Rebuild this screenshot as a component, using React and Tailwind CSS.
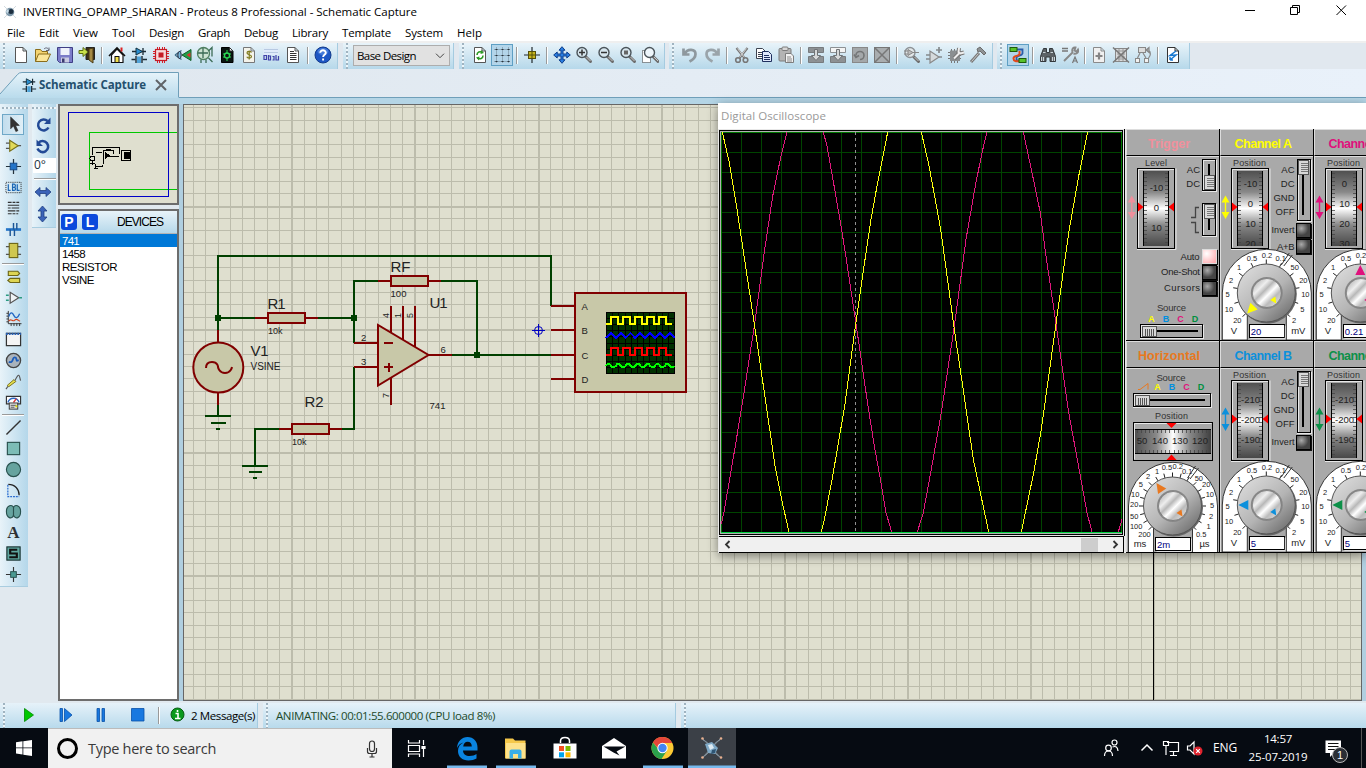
import React, { useLayoutEffect, useRef, useState } from "react";

const UI = "font-['Open_Sans','Noto_Sans',sans-serif]";
const ARIAL = "font-['Liberation_Sans',Arial,sans-serif]";

/* Text set to an exact advance width through letter spacing. */
function Fit({ w, className = "", children }) {
  const ref = useRef(null);
  const [ls, setLs] = useState(0);
  useLayoutEffect(() => {
    const natural = ref.current.getBoundingClientRect().width;
    setLs((w - natural) / String(children).length);
  }, []);
  return (
    <span ref={ref} className={`inline-block shrink-0 whitespace-pre ${className}`} style={{ letterSpacing: `${ls}px` }}>
      {children}
    </span>
  );
}

/* ---------- toolbar icons, 18x18 ---------- */
const page = (stroke = "#555", fill = "#fff") => (
  <path d="M3.500 1.500h7.500l3.500 3.500v11.500h-11z M11 1.500v3.500h3.500" fill={fill} stroke={stroke} />
);
const Mag = ({ children, c = "#4b545a", f = "#d7e6ee" }) => (
  <>
    <path d="M10.500 10.500l5 5" stroke="#6d6d6d" strokeWidth="3" strokeLinecap="round" />
    <path d="M11.500 11l4 4" stroke="#c8c8c8" strokeWidth="1" />
    <circle cx="7" cy="6.500" r="5" fill={f} stroke={c} strokeWidth="1.400" />
    {children}
  </>
);
const schem = (
  <>
    <path d="M2 5.500h14M13 2v7M1.500 13.500h4M12.500 13.500h4.500" stroke="#1b2a33" strokeWidth="1.300" />
    <path d="M6 2v7l6.500-3.500z" fill="#2a8fd0" stroke="#12303f" />
    <path d="M6 10v7M12 10v7" stroke="#1b2a33" strokeWidth="1.400" />
    <path d="M8 10.500v6.500M10 10.500v6.500" stroke="#2a8fd0" strokeWidth="1.500" />
  </>
);
const IC = {
  fresh: page(),
  open: (
    <>
      <path d="M1.500 15.500v-12h5l1.500 2h5.500v3" fill="#f4d470" stroke="#8a6d1c" />
      <path d="M1.500 15.500l3-7.500h12l-3.500 7.500z" fill="#fbe699" stroke="#8a6d1c" />
      <path d="M10 3c2-2 4-1 5 1m0-2.500v3h-3" fill="none" stroke="#667" />
    </>
  ),
  save: (
    <>
      <path d="M1.500 1.500h15v15h-13l-2-2z" fill="#7b7cc9" stroke="#3f3f86" />
      <rect x="4.500" y="2" width="9" height="7" fill="#eef2fb" />
      <rect x="5" y="11.500" width="8" height="5" fill="#c9cbe2" />
      <rect x="6" y="12.500" width="2.500" height="4" fill="#3a3b70" />
    </>
  ),
  exit: (
    <>
      <path d="M8 1.500h8.500v12h-8.500z" fill="#3c2f16" stroke="#222" />
      <path d="M11 3l4-1v15l-4-3z" fill="#a58a44" stroke="#4a3b15" />
      <path d="M1 4.500h4v-3l5 4.500-5 4.500v-3h-4z" fill="#c9e04a" stroke="#5b6d14" />
    </>
  ),
  home: (
    <>
      <path d="M3.500 9v7.500h11.500v-7.500l-6-6z" fill="#fff" stroke="#111" strokeWidth="1.200" />
      <path d="M1 10l8-8 8 8" fill="none" stroke="#111" strokeWidth="1.600" />
      <rect x="12.500" y="1.500" width="2" height="4" fill="#d22" />
      <rect x="7" y="10.500" width="4" height="6" fill="#f3e04a" stroke="#111" />
    </>
  ),
  schem,
  chip: (
    <>
      <path d="M5.500 1v16M7.500 1v16M10.500 1v16M12.500 1v16M1 5.500h16M1 7.500h16M1 10.500h16M1 12.500h16" stroke="#d8202a" />
      <rect x="3.500" y="3.500" width="11" height="11" fill="#f6d9da" stroke="#c51b25" strokeWidth="1.200" />
      <rect x="6.500" y="6.500" width="5" height="5" fill="#c51b25" />
    </>
  ),
  view3d: (
    <>
      <path d="M1 9l6.500-4.500M1 9l6.500 4.500" stroke="#3c6a86" strokeWidth="1.300" />
      <ellipse cx="5.500" cy="9" rx="1.700" ry="3.500" fill="#79b8dc" stroke="#223" />
      <path d="M8 9l9-5.500v11z" fill="#23a04a" stroke="#145c2b" />
      <path d="M12.500 9l4-2.500v5z" fill="#d33" />
    </>
  ),
  gerber: (
    <>
      <circle cx="7.500" cy="7.500" r="6" fill="#cde3d2" stroke="#4f7f60" strokeWidth="1.300" />
      <path d="M2 7h10M7 2v10M5 13.500v3.500M10 13.500v3.500M12.500 5l3.500-3.500v9M12.500 12l4 4" fill="none" stroke="#3b6b55" strokeWidth="1.300" />
    </>
  ),
  explorer: (
    <>
      <path d="M3.500 1.500h8l3.500 3.500v11.500h-11.500z" fill="#0a1510" stroke="#000" />
      <path d="M11.500 1.500v3.500h3.500z" fill="#fff" stroke="#333" />
      <circle cx="9" cy="9.500" r="2.500" fill="none" stroke="#2bdc55" strokeWidth="1.300" />
      <path d="M9 4v3M9 12v3M5 8h2M5 11h2M11 8h2M11 11h2" stroke="#2bdc55" />
    </>
  ),
  bom: (
    <>
      {page("#777", "#f4f3ea")}
      <path d="M11.500 6.500c-1-1.500-4.500-1.500-4.500.5s4.500 1.500 4.500 3.500-4 2-4.700.3M9.200 4.500v9" fill="none" stroke="#7f7a1c" strokeWidth="1.200" />
    </>
  ),
  code: (
    <>
      <rect x="1.500" y="2.500" width="15" height="6.500" fill="#dfeafa" />
      <path d="M2 3.500h14M2 6.500h14" stroke="#b7c9e2" />
      <path d="M2 9.500h2.500v4h-2.500zM6.500 9v5h2v-4h-2M10.500 10.500h1.500v3.500h-1.500M14 9v5h2.500v-4" fill="none" stroke="#3f40a8" strokeWidth="1.200" />
    </>
  ),
  notes: (
    <>
      {page()}
      <path d="M6 5.500h4M6 7.500h6.500M6 9.500h6.500M6 11.500h6.500M6 13.500h6.500" stroke="#333" />
    </>
  ),
  help: (
    <>
      <circle cx="9" cy="9" r="8" fill="#1d56c4" stroke="#123a8b" />
      <ellipse cx="9" cy="5.500" rx="5.500" ry="3.500" fill="#5f93e8" opacity=".6" />
      <path d="M6.200 6.800c0-3.400 5.600-3.400 5.600 0 0 2-2.700 2-2.700 4.200M9.100 12.500v2" fill="none" stroke="#fff" strokeWidth="1.900" />
    </>
  ),
  redraw: (
    <>
      {page()}
      <path d="M6 9c0-3 3-4 5.500-2.500M12 9.500c0 3-3 4-5.500 2.500" fill="none" stroke="#2c9a25" strokeWidth="1.600" />
      <path d="M10 4l3 3-3.500 1zM8 14.500l-3-3 3.500-1z" fill="#2c9a25" />
    </>
  ),
  grid: (
    <>
      <path d="M1 3.500h16M1 9.500h16M1 15.500h16M3.500 1v16M9.500 1v16M15.500 1v16" stroke="#51606b" strokeDasharray="1 1" strokeDashoffset=".5" opacity=".75" />
      <path d="M2.500 3.500h2M8.500 3.500h2M14.500 3.500h2M2.500 9.500h2M8.500 9.500h2M14.500 9.500h2M2.500 15.500h2M8.500 15.500h2M14.500 15.500h2" stroke="#26323b" />
    </>
  ),
  origin: (
    <>
      <path d="M1 9h16M9 1v16" stroke="#20282c" strokeWidth="1.200" />
      <rect x="5.500" y="5.500" width="7" height="7" fill="#c6b51e" stroke="#55500c" />
      <path d="M5 9h8M9 5v8" stroke="#55500c" />
    </>
  ),
  pan: (
    <path
      d="M9 .7l3 3.500h-2v3.800h3.800v-2l3.500 3-3.500 3v-2h-3.800v3.800h2l-3 3.500-3-3.500h2v-3.800h-3.800v2l-3.500-3 3.500-3v2h3.800v-3.800h-2z"
      fill="#2b7ee0"
      stroke="#0d3f8c"
    />
  ),
  zin: <Mag><path d="M4 6.500h6M7 3.500v6" stroke="#333" strokeWidth="1.500" /></Mag>,
  zout: <Mag><path d="M4 6.500h6" stroke="#333" strokeWidth="1.500" /></Mag>,
  zall: <Mag><rect x="5" y="4.500" width="4" height="4" fill="#666" /></Mag>,
  zarea: (
    <>
      <path d="M1.500 4.500h8v12h-8z" fill="#fff" stroke="#333" strokeDasharray="1 1" />
      <g transform="translate(1.500 0)"><Mag f="#eef6fb" /></g>
    </>
  ),
  undo: <path d="M2.500 2.500v6h6M3.500 8c3-6 11-5 11 0 0 4-3 6-6 7.500" fill="none" stroke="#8e989e" strokeWidth="2.700" />,
  redo: <path d="M15.500 2.500v6h-6M14.500 8c-3-6-11-5-11 0 0 4 3 6 6 7.500" fill="none" stroke="#9aa4aa" strokeWidth="2.700" />,
  cut: (
    <>
      <path d="M3.500 2l8 10M14.500 2l-8 10" stroke="#777" strokeWidth="2.200" />
      <path d="M4.500 2.500l7 9M13.500 2.500l-7 9" stroke="#e8e8e8" strokeWidth=".8" />
      <circle cx="5" cy="14" r="2.300" fill="none" stroke="#777" strokeWidth="1.600" />
      <circle cx="12.500" cy="14" r="2.300" fill="none" stroke="#777" strokeWidth="1.600" />
    </>
  ),
  copy: (
    <>
      <path d="M1.500 2.500h6l2.500 2.500v7.500h-8.500z" fill="#fff" stroke="#3d4350" />
      <path d="M3 6.500h4M3 8.500h4M3 10.500h4" stroke="#3d4350" />
      <path d="M7.500 5.500h6l3 3v7h-9z" fill="#dfe8fa" stroke="#1f2f5e" />
      <path d="M9 9.500h5M9 11.500h6M9 13.500h6" stroke="#1f2f5e" />
    </>
  ),
  paste: (
    <>
      <rect x="2" y="2.500" width="12" height="12.500" rx="1" fill="#b4b4b4" stroke="#7d7d7d" />
      <rect x="5" y="1" width="6" height="3.500" rx="1" fill="#d7d7d7" stroke="#7d7d7d" />
      <path d="M8.500 7.500h5.500l2.500 2.500v6.500h-8z" fill="#f2f2f2" stroke="#7d7d7d" />
      <path d="M10 11h4M10 13h5M10 15h5" stroke="#8b8b8b" />
    </>
  ),
  bcopy: (
    <>
      <path d="M1.500 1.500h15v5h-15zM1.500 10.500h15v6h-15z" fill="#8d9194" stroke="#777b7e" />
      <path d="M7.500 3.500h3v6h3l-4.500 5-4.500-5h3z" fill="#d6d8d9" stroke="#6f7376" />
    </>
  ),
  bmove: (
    <>
      <path d="M1.500 1.500h15v5h-15z" fill="#f4f4f4" stroke="#8d9194" />
      <path d="M1.500 10.500h15v6h-15z" fill="#8d9194" stroke="#777b7e" />
      <path d="M7.500 3.500h3v6h3l-4.500 5-4.500-5h3z" fill="#d6d8d9" stroke="#6f7376" />
    </>
  ),
  brot: <><rect x="1.500" y="1.500" width="15" height="15" fill="#a4a8aa" stroke="#888" /><path d="M5 9.500a4 4 0 1 1 4 4M3 8.500l2 3 3-2" fill="none" stroke="#747677" strokeWidth="1.600" /></>,
  bdel: <><rect x="1.500" y="1.500" width="15" height="15" fill="#a9adaf" stroke="#777" /><path d="M2 2l14 14M16 2l-14 14" stroke="#777" strokeWidth="1.500" /></>,
  pick: <Mag c="#8d9296" f="#e3e8ea"><path d="M5 3.500v6l5-3zM1 5h4M1 8h4M10 6.500h6" fill="#bbb" stroke="#888" /></Mag>,
  mkdev: <><path d="M5 5v12l9-6z" fill="#d5dadc" stroke="#888" strokeWidth="1.200" /><path d="M1 9h4M1 13h4M11 4h6M14 1v6M14 11h3" stroke="#858a8d" strokeWidth="1.700" /></>,
  pkg: (
    <>
      <path d="M4.500 3v14M7.500 3v14M10.500 3v14M1 6.500h13M1 9.500h13M1 12.500h13" stroke="#777" />
      <rect x="3" y="4.500" width="10" height="10.500" fill="#8b8f91" />
      <path d="M7 12.500l6-6M12 2l-.5 4 2 1.500 3.500-1" fill="none" stroke="#777" strokeWidth="4" />
      <path d="M7 12.500l6-6M12 2l-.5 4 2 1.500 3.500-1" fill="none" stroke="#eee" strokeWidth="2" />
    </>
  ),
  hammer: <><path d="M2 16l8-9" stroke="#777" strokeWidth="3" /><path d="M2.500 15.500l7-8" stroke="#ccc" /><path d="M8 3l3-2 6 6-2 2-4-4-2 1z" fill="#8e9294" stroke="#6c6c6c" /></>,
  wire: (
    <>
      <path d="M8 3.500h5.500v4c-1 3-5 1-6 4v3h3" fill="none" stroke="#2b5ca8" strokeWidth="1.800" />
      <path d="M10.500 5v3c-1 3-6 1-6 4.500 0 3 3 3 5.500 2.500" fill="none" stroke="#e3491b" strokeWidth="2" />
      <rect x="1" y="1.500" width="7" height="4" fill="#58c32a" stroke="#1c5b0a" />
      <rect x="10" y="12.500" width="7" height="4" fill="#58c32a" stroke="#1c5b0a" />
    </>
  ),
  find: (
    <>
      <path d="M4.500 2.500h3v4h3v-4h3l3 8v5h-5.500v-4.500h-4v4.500h-5.500v-5z" fill="#5c6266" stroke="#33383b" />
      <path d="M2.500 11v4M4.500 11v4M13.500 11v4M15.500 11v4M4 6.500h2.500M11.500 6.500h2.500" stroke="#cbd5da" strokeWidth="1.100" />
    </>
  ),
  prop: <><path d="M1 2.500h6M1 5h6" stroke="#777" strokeWidth="1.300" /><path d="M3 15l9-9M11.500 6c-1-3 1-5 3-4.500l-1 3 2 1 1.500-2c1 3-2 5-4.500 4" fill="none" stroke="#888" strokeWidth="1.900" /><path d="M11.500 17l2.500-6 2.500 6M12.500 15h3" fill="none" stroke="#777" strokeWidth="1.200" /></>,
  newsh: <>{page("#8a8a8a", "#f0f0f0")}<path d="M5.500 10h7M9 6.500v7" stroke="#858585" strokeWidth="2.200" /></>,
  rmsh: <><rect x="3.500" y="2.500" width="11" height="13" fill="#d9dadb" stroke="#888" /><path d="M5 5h8M5 8h8M5 11h8M6 13h6M7 3v12M11 3v12" stroke="#999" /><path d="M1 1.500l16 15M17 1.500l-16 15" stroke="#777" strokeWidth="1.500" /></>,
  hier: <><rect x="4.500" y="1.500" width="7" height="5" fill="#ddd" stroke="#888" /><rect x="1.500" y="12.500" width="4" height="4" fill="#f2f2f2" stroke="#888" /><rect x="10.500" y="12.500" width="4" height="4" fill="#f2f2f2" stroke="#888" /><path d="M6 7l-2.500 5M9 7l3 5M12 4h2.500c3 2 2 6 0 8M12 4l3-2.500v5z" fill="none" stroke="#888" strokeWidth="1.200" /></>,
  erc: <>{page("#333")}<path d="M12 5l-6 4.500 6-.5-6 5M6 14v-3M6 14h3" fill="none" stroke="#1878d0" strokeWidth="1.500" /></>,

  /* mode icons */
  arrow: <path d="M6 1v12.500l3-3 2.500 6 2.200-1-2.500-5.500h4z" fill="#333" stroke="#222" strokeWidth=".6" />,
  comp: <><path d="M1 6.500h4M1 12h4M13 9.200h4" stroke="#555" strokeWidth="1.300" /><path d="M5 3.500v11.500l9-5.700z" fill="#e2da58" stroke="#77701b" strokeWidth="1.200" /></>,
  junc: <><path d="M1 9h16M9 1v16" stroke="#24323c" strokeWidth="1.300" /><rect x="5.500" y="5.500" width="7" height="7" fill="#2474c8" stroke="#174a86" /></>,
  lbl: <><rect x="1" y="3.500" width="16" height="11" fill="none" stroke="#222" strokeDasharray="1 1" /><path d="M3.500 5.500v6.500h2.500M8 5.500v6.500h1.500c2.500 0 2-3.200 0-3.200h-1.300 1.300c2 0 2-3.300 0-3.300zM13 5.500v6.500h2.500" fill="none" stroke="#1b66b4" strokeWidth="1.300" /></>,
  script: <path d="M3 2.500h4M8 2.500h3M12 2.500h3M3 5.500h12M3 8.500h3M7 8.500h8M3 11.500h8M12 11.500h3M3 14.500h4M8 14.500h3M12 14.500h2" stroke="#333" strokeWidth="1.200" />,
  bus: <><path d="M1 9h16" stroke="#2474c8" strokeWidth="2.800" /><path d="M5.500 9v7M12.500 2v7M9 2v7M10 9v7" stroke="#1b5596" strokeWidth="1.500" /></>,
  sub: <><path d="M1 5h4M1 13h4M13 5h4M13 13h4" stroke="#555" strokeWidth="1.300" /><rect x="4.500" y="1.500" width="9" height="15" fill="#cfc750" stroke="#6d6718" strokeWidth="1.200" /></>,
  term: <path d="M3.500 3.500h10l2 2.200-2 2.200h-10zM15.500 11h-10l-2.500 2.200 2.500 2.200h10z" fill="#ddd553" stroke="#6d6718" strokeWidth="1.200" />,
  pin: <><path d="M5.500 3.500v11.500l9-5.700z" fill="#eef3f5" stroke="#555" strokeWidth="1.300" /><path d="M1 6.500h3M1 12h3M15 9.200h3" stroke="#2a9a80" strokeWidth="1.600" /></>,
  graph: <><path d="M3.500 1v13.500h14M1.500 3.500h2M1.500 6.500h2M1.500 9.500h2M1.500 12.500h2M6.500 14v3M9.500 14v3M12.500 14v3M15.500 14v3" stroke="#333" fill="none" /><path d="M4 7c2-6 4-4 5.500-1s4 3 6-2" fill="none" stroke="#2267c4" strokeWidth="1.400" /><path d="M4 12c2-4 4 1 6-1s3-1 6 1" fill="none" stroke="#d2431e" strokeWidth="1.200" /></>,
  popup: <><rect x="1.500" y="2.500" width="15" height="13" fill="#f4f4f4" stroke="#333" strokeWidth="1.300" /><path d="M1 3h16" stroke="#2b62b4" strokeWidth="2.500" strokeDasharray="2 1" /></>,
  gen: <><circle cx="9" cy="9" r="7.500" fill="#a9b3bc" stroke="#444" strokeWidth="1.400" /><path d="M4 10.500c3 1 4-1 4.500-3s3-3 3.500 0 1 1.500 2.500 1" fill="none" stroke="#1c5dbb" strokeWidth="1.900" /></>,
  probe: <><path d="M1 17l3-4" stroke="#555" strokeWidth="1.200" /><path d="M4 14.500l-1.500-1.500 7-6 2 2z" fill="#e6e04e" stroke="#777020" /><path d="M10.500 8c2-4 4-8 5-4l1 4" fill="none" stroke="#555" strokeWidth="1.200" /></>,
  instr: <><path d="M1.500 2.500h15v8h-15z" fill="#fff" stroke="#333" strokeWidth="1.200" /><path d="M3 9c2-6 10-6 12 0" fill="none" stroke="#2a67c2" strokeWidth="1.400" /><path d="M9 9l3-4" stroke="#d33" strokeWidth="1.400" /><rect x="4.500" y="9.500" width="9" height="6.500" fill="#ddd" stroke="#333" /><path d="M6 12h6M6 14h4" stroke="#555" /><path d="M11 13h2" stroke="#dd0" strokeWidth="2" /></>,
  line: <path d="M1.500 16.500l15-15" stroke="#333" strokeWidth="1.500" />,
  box: <rect x="2.500" y="2.500" width="13" height="13" fill="#7cbcb6" stroke="#28504d" strokeWidth="1.200" />,
  circ: <circle cx="9" cy="9" r="7.500" fill="#66a39f" stroke="#28504d" strokeWidth="1.200" />,
  arc: <><path d="M3 3v12.500h12" fill="none" stroke="#2a6bd0" strokeWidth="1.300" strokeDasharray="2 1" /><path d="M3.500 2.500c7 0 11.500 5 11.500 11.500" fill="none" stroke="#222" strokeWidth="1.300" /></>,
  path: <path d="M9 5c-1-4-7.500-3-7.500 4s6 9 7.500 4c2 5 7.500 3 7.500-4s-6.500-8-7.500-4z M9 5v8" fill="#66a39f" stroke="#28504d" strokeWidth="1.200" />,
  text: <text x="9" y="15" textAnchor="middle" className="font-['Liberation_Serif',serif] text-[18px] font-bold" fill="#2e3234">A</text>,
  sym: <><rect x="2" y="2" width="14" height="14" fill="#5fa69f" stroke="#16302e" strokeWidth="1.200" /><path d="M13 5h-7.500v4h7v4h-8" fill="none" stroke="#111" strokeWidth="2.300" /></>,
  mark: <><path d="M1 9h16M9 1v16" stroke="#333" strokeWidth="1.200" /><rect x="6" y="6" width="6" height="6" fill="#4b9a92" stroke="#28504d" /></>,
};

const Icon = ({ n, s = 18 }) => <svg width={s} height={s} viewBox="0 0 18 18" fill="none">{IC[n]}</svg>;

const Grip = () => <div className="ml-[3px] mr-[5px] w-[2px] self-stretch bg-[repeating-linear-gradient(to_bottom,#9fb3c0_0_2px,#eef6fa_2px_4px)]" />;
const Sep = ({ w = "w-2" }) => <div className={`flex ${w} justify-center pb-[2px]`}><div className="h-[17px] w-[2px] border-l border-[#9a9a9a] bg-white" /></div>;
const Tool = ({ n, on }) => (
  <div className={`mb-[2px] flex h-[22px] w-[22px] shrink-0 items-center justify-center ${on ? "border border-[#5e9fc4] bg-[#b3d5ea]" : ""}`}><Icon n={n} /></div>
);
const Bar = ({ items, className }) => (
  <div className={`flex h-[26px] items-center border-r border-[#a5cbe0] bg-linear-to-b from-[#e8f3f9] to-[#b6d8ea] ${className}`}>
    <Grip />
    {items.map((n, i) => n === "|" ? <Sep key={i} /> : n === "|7" ? <Sep key={i} w="w-[7px]" /> : n[0] === "*" ? <Tool key={i} n={n.slice(1)} on /> : <Tool key={i} n={n} />)}
  </div>
);

function Header() {
  const menus = [["File", 18], ["Edit", 20], ["View", 25], ["Tool", 23], ["Design", 35], ["Graph", 32], ["Debug", 34], ["Library", 36], ["Template", 49], ["System", 38], ["Help", 25]];
  return (
    <header>
      <div className="flex h-6 items-center bg-white text-[11.5px] text-black">
        <svg width="14" height="14" viewBox="0 0 14 14" className="ml-[3px] mr-[6px]">
          <path d="M1 1l12 12M13 1l-12 12" stroke="#d3dbe0" />
          <circle cx="7" cy="7" r="4.300" fill="#7d97a9" />
          <circle cx="8" cy="6.500" r="2.500" fill="#1d2f40" />
          <path d="M3 6l2-2 1 2-2 3z" fill="#c8dbe6" />
        </svg>
        <Fit w={394}>INVERTING_OPAMP_SHARAN - Proteus 8 Professional - Schematic Capture</Fit>
        <svg width="121" height="24" viewBox="1245 0 121 24" className="ml-auto" fill="none" stroke="#000">
          <path d="M1245 10.500h10M1290.500 7.500h7v7h-7zM1292.500 7.500v-2h7v7h-2M1336.500 5.500l9.500 9.500M1346 5.500l-9.500 9.500" />
        </svg>
      </div>
      <div className="flex h-[17px] items-center gap-[14px] bg-white pl-[7px] text-[11.5px] text-black">
        {menus.map(([m, w]) => <Fit key={m} w={w}>{m}</Fit>)}
      </div>
      <div className="flex h-7 items-start bg-[#e1e8ef] border-t-2 border-[#efefef]">
        <Bar className="w-[338px]" items={["fresh", "open", "save", "exit", "|", "home", "schem", "chip", "view3d", "gerber", "explorer", "bom", "code", "notes", "|", "help"]} />
        <div className="ml-[5px] flex h-[26px] w-[111px] items-center border-r border-[#a5cbe0] bg-linear-to-b from-[#e8f3f9] to-[#b6d8ea]">
          <Grip />
          <div className="mb-px flex h-[21px] w-[97px] items-center justify-between border border-[#adadad] bg-[#e1e1e1] pl-[3px] pr-1 text-[11.5px] text-black">
            <Fit w={59}>Base Design</Fit>
            <svg width="10" height="6" viewBox="0 0 10 6"><path d="M1 .7l4 4 4-4" fill="none" stroke="#444" /></svg>
          </div>
        </div>
        <Bar className="ml-[5px] w-[206px]" items={["redraw", "*grid", "|", "origin", "|", "pan", "zin", "zout", "zall", "zarea"]} />
        <Bar className="ml-[4px] w-[324px]" items={["undo", "redo", "|", "cut", "copy", "paste", "|", "bcopy", "bmove", "brot", "bdel", "|", "pick", "mkdev", "pkg", "hammer"]} />
        <Bar className="ml-[4px] w-[193px]" items={["*wire", "|", "find", "prop", "|7", "newsh", "rmsh", "hier", "|", "erc"]} />
      </div>
      <div className="flex h-[29px] items-end border-b border-[#6f9fb9] bg-linear-to-r from-[#dfe7ee] to-[#e9f1fa]">
        <div className="relative h-[25px] w-[179px]">
          <svg className="absolute inset-0" width="179" height="26" viewBox="0 0 179 26">
            <defs><linearGradient id="tab" x1="0" y1="0" x2="0" y2="1"><stop offset="0" stopColor="#e6f3fa" /><stop offset="1" stopColor="#b9dbec" /></linearGradient></defs>
            <path d="M0 22L17.500 2.500Q19 .5 22 .5H178.500V26H0z" fill="url(#tab)" />
            <path d="M0 22L17.500 2.500Q19 .5 22 .5H178.500V25" fill="none" stroke="#6f9fb9" />
          </svg>
          <div className="relative flex h-[26px] items-center pl-[21px]">
            <Icon n="schem" s={16} />
            <Fit w={107} className="ml-[2px] text-[11.5px] font-bold text-[#24506e]">Schematic Capture</Fit>
            <svg width="12" height="12" viewBox="0 0 12 12" className="ml-[9px]"><path d="M1 1l10 10M11 1l-10 10" stroke="#606468" strokeWidth="2" /></svg>
          </div>
        </div>
      </div>
    </header>
  );
}

const ModeRow = ({ n, on }) => (
  <div className={`flex h-[21px] w-[22px] items-center justify-center ${on ? "border border-[#6fa8c8] bg-linear-to-r from-[#c2dded] to-[#e0eff7]" : ""}`}><Icon n={n} s={17} /></div>
);
const HGrip = () => <div className="mb-[5px] mt-[3px] h-[2px] w-full bg-[repeating-linear-gradient(to_right,#9fb3c0_0_2px,#eef6fa_2px_4px)]" />;
const HSep = ({ h = "h-[5px]" }) => <div className={`${h} flex items-center`}><div className="h-[2px] w-[22px] border-t border-[#9a9a9a] bg-white" /></div>;

function ToolColumns() {
  return (
    <div className="flex w-[58px] shrink-0 items-start gap-1">
      <div className="flex h-[483px] w-7 flex-col border-b border-[#a9cde0] bg-linear-to-r from-[#e8f3f9] to-[#b4d7ea] pl-[2px]">
        <HGrip />
        <ModeRow n="arrow" on />
        {["comp", "junc", "lbl", "script", "bus", "sub"].map((n) => <ModeRow key={n} n={n} />)}
        <HSep />
        {["term", "pin", "graph", "popup", "gen", "probe", "instr"].map((n) => <ModeRow key={n} n={n} />)}
        <HSep h="h-[4px]" />
        {["line", "box", "circ", "arc", "path", "text", "sym", "mark"].map((n) => <ModeRow key={n} n={n} />)}
      </div>
      <div className="flex h-[124px] w-6 flex-col border-b border-[#a9cde0] bg-linear-to-r from-[#e8f3f9] to-[#b4d7ea]">
        <HGrip />
        <svg width="22" height="42" viewBox="0 0 22 42" fill="none" stroke="#234a96" strokeWidth="2.500">
          <path d="M15.500 7a5.500 5.500 0 1 0 1 6.500M6.500 29a5.500 5.500 0 1 1-1 5.500" />
          <path d="M18.500 3.500v6.500h-6.500zM4.500 25.500v6.500h6.500z" fill="#234a96" stroke="none" />
        </svg>
        <div className="ml-px mt-[2px] h-[15px] w-[23px] bg-white pl-px text-[12px] leading-[13px] text-[#234]">0°</div>
        <div className="ml-[2px] mt-[5px] h-[2px] w-[22px] border-t border-[#9a9a9a] bg-white" />
        <svg width="22" height="42" viewBox="0 0 22 42" fill="#3a63b8" stroke="#1f3f80" strokeWidth=".8">
          <path d="M3 12l5-4.500v3h6v-3l5 4.500-5 4.500v-3h-6v3zM10.500 26l4.500 5h-3v6h3l-4.500 5-4.500-5h3v-6h-3z" />
        </svg>
      </div>
    </div>
  );
}

function SidePanel() {
  return (
    <div className="flex w-[121px] shrink-0 flex-col gap-[4px]">
      <svg width="121" height="101" viewBox="58 104 121 101" shapeRendering="crispEdges">
        <rect x="58" y="104" width="121" height="101" fill="#dfdfcf" />
        <path d="M178 132.500H89.500v57h89" fill="none" stroke="#00c800" />
        <rect x="68.500" y="112.500" width="100" height="84" fill="none" stroke="#0000c8" />
        <g fill="none" stroke="#000">
          <path d="M92.500 155v-7.500h27v6.500M96 152.500h6M103.500 164v-14h10v4M105 152v7l4-3.500zM109 156.500h10M96 166.500h6v-2M106 149.500h5" />
          <circle cx="92.500" cy="158.500" r="2.500" />
          <path d="M92.500 161v4M90 163.500h5M95.500 164v4M94 168.500h4" />
          <rect x="121.500" y="150.500" width="9" height="10" />
        </g>
        <rect x="124" y="152" width="6" height="7" />
        <path d="M105 152v7l4-3.500z" />
        <rect x="59" y="105" width="119" height="99" fill="none" stroke="#6d6d6d" strokeWidth="2" />
      </svg>
      <div className={`flex h-[492px] flex-col border-2 border-[#6d6d6d] bg-white ${ARIAL} text-[12px] text-black`}>
        <div className="flex h-[23px] items-center border-b border-[#b4b4b4] bg-linear-to-b from-[#e8f3f9] to-[#b6d8ea] pl-[1px]">
          {["P", "L"].map((c) => <div key={c} className="mr-[5px] flex h-4 w-4 items-center justify-center rounded-[3px] bg-[#0b49dc] text-[14px] font-bold leading-none text-white">{c}</div>)}
          <Fit w={46} className="ml-[14px]">DEVICES</Fit>
        </div>
        {[["741", 17], ["1458", 23], ["RESISTOR", 55], ["VSINE", 32]].map(([d, w], i) => (
          <div key={d} className={`h-[13px] pl-[2px] leading-[14px] text-[11.5px] ${i === 0 ? "bg-[#0078d7] text-white" : ""}`}><Fit w={w}>{d}</Fit></div>
        ))}
      </div>
    </div>
  );
}

/* ---------- schematic sheet ---------- */
const range = (a, b, s) => { const r = []; for (let v = a; v < b; v += s) r.push(v); return r; };
const STEP = 12.307;
const T = ({ x, y, s = 9, w, a, rot, c = "#222", b, children }) => (
  <text x={x} y={y} fontSize={s} textLength={w} textAnchor={a} fill={c} fontWeight={b ? 700 : 400} transform={rot ? `rotate(-90 ${x} ${y})` : undefined} className={ARIAL}>{children}</text>
);
const GREEN = "#004000", RED = "#800000";
const Res = ({ x, y }) => (
  <g strokeWidth="2" stroke={RED}>
    <path d={`M${x - 13} ${y}h13M${x + 37} ${y}h13`} />
    <rect x={x} y={y - 5} width="37" height="10" fill="#c8c8a8" />
  </g>
);

function Sheet() {
  const xs = range(168.7, 1362, STEP), ys = range(83, 701, 12.32);
  const sq = (x, y) => `M${x} ${y}h5v-7h7v7h5v-7h7v7h5v-7h7v7h5v-7h7v7h5v-7h7v7h6`;
  return (
    <svg width="1179" height="597" viewBox="183 104 1179 597" className="block">
      <rect x="183" y="104" width="1179" height="597" fill="#dfdfcf" />
      <g shapeRendering="crispEdges" fill="#bcbcac">
        {xs.map((x, i) => <rect key={`x${i}`} x={Math.round(x - 0.4)} y="104" width={i % 10 === 0 ? 2 : 1} height="597" />)}
        {ys.map((y, i) => <rect key={`y${i}`} x="183" y={Math.round(y - 0.4)} width="1179" height={i % 10 === 0 ? 2 : 1} />)}
      </g>
      <path d="M1153.500 104v597" stroke="#000" shapeRendering="crispEdges" />
      <g fill="none" stroke={GREEN} strokeWidth="2" shapeRendering="crispEdges">
        <path d="M218 330v-74h333v50M218 318h38M317 318h38M354 343v-62h25M440 281h37v74M451 355h101M354 367v62h-12M279 429h-24v37M242 466h26M249 472h13M253 478h4M218 404v12M205 416h26M211 423h15M216 429h4" />
      </g>
      <path d="M215 315h6v6h-6zM351 315h6v6h-6zM474 352h6v6h-6z" fill={GREEN} />
      <g fill="none" shapeRendering="crispEdges"><Res x={268} y={318} /><Res x={391} y={281} /><Res x={292} y={429} /></g>
      <g fill="none" stroke={RED} strokeWidth="2">
        <path shapeRendering="crispEdges" d="M218 330v13M218 392v13M354 343h24M354 367h24M391 306v26M403 306v34M415 306v41M391 378v27M428 355h24M551 306h24M551 330h24M551 355h24M551 379h24" />
        <circle cx="218.300" cy="367.500" r="25" fill="#c8c8a8" />
        <path d="M206 368q0-6 6-6c6 0 6 5 6 5s1 6 7 6 7-6 7-6" />
        <path d="M378 325v60.500l50.500-30.500z" fill="#c8c8a8" />
        <path shapeRendering="crispEdges" d="M384 343h9M384 367h9M388.500 363v9" />
        <rect x="575" y="293" width="111" height="99" fill="#c8c8a8" shapeRendering="crispEdges" />
      </g>
      <T x={267.500} y={309} s={15} w={18}>R1</T>
      <T x={390.500} y={272} s={15} w={20}>RF</T>
      <T x={429.500} y={308} s={15} w={18}>U1</T>
      <T x={250.500} y={356} s={15} w={18}>V1</T>
      <T x={304.500} y={407} s={15} w={19}>R2</T>
      <T x={268} y={334}>10k</T>
      <T x={292} y={445}>10k</T>
      <T x={390.500} y={297} w={16} s={9.500}>100</T>
      <T x={250.500} y={370} s={10} w={30}>VSINE</T>
      <T x={429.500} y={409} w={16} s={9.500}>741</T>
      <T x={361} y={341} s={9.500}>2</T><T x={361} y={365} s={9.500}>3</T><T x={440.500} y={353} s={9.500}>6</T>
      <T x={389} y={318} rot>4</T><T x={401} y={318} rot>1</T><T x={413} y={318} rot>5</T><T x={389} y={398} rot>7</T>
      {[["A", 310], ["B", 334], ["C", 359], ["D", 383]].map(([l, y]) => <T key={l} x={581.500} y={y} s={9.500}>{l}</T>)}
      <rect x="606" y="312" width="69" height="62" fill="#003000" />
      <path shapeRendering="crispEdges" stroke="#000" fill="none" d={`${range(606.500, 676, 6.200).map((x) => `M${Math.floor(x) + 0.5} 312v62`).join("")}${range(312.500, 375, 6.100).map((y) => `M606 ${Math.floor(y) + 0.5}h69`).join("")}`} />
      <g fill="none" strokeWidth="2" shapeRendering="crispEdges">
        <path d={sq(606, 324)} stroke="#ff0" />
        <path d={sq(606, 355)} stroke="#f00" />
        <path d={`M606 338${range(0, 7, 1).map(() => "l4.900-5 4.900 5").join("")}`} stroke="#00f" />
        <path d={`M606 366${range(0, 7, 1).map(() => "q2.500-5 5 0q2.500 2.500 4.800 0").join("")}`} stroke="#0f0" />
      </g>
      <g fill="none" stroke="#0000c0"><circle cx="538.500" cy="330.500" r="4" /><path d="M532 330.500h13M538.500 324v13" /></g>
      <path d="M183.500 701v-596.500h1178M183 700.500h1179M1361.500 104v597" fill="none" stroke="#666" strokeWidth="1" shapeRendering="crispEdges" />
    </svg>
  );
}

/* ---------- oscilloscope ---------- */
const tr = (pts) => pts.map(([x, y]) => `${(x / 3 + 712).toFixed(1)},${(y / 3 + 96).toFixed(1)}`).join(" ");
const YEL = [
  [[31, 108], [52, 200], [75, 340], [127, 683], [163, 930], [190, 1115], [212, 1225], [231, 1308]],
  [[328, 1308], [338, 1265], [362, 1140], [398, 930], [431, 683], [462, 470], [477, 370], [495, 270], [515, 170], [527, 108]],
  [[628, 108], [649, 200], [655, 230], [686, 400], [727, 700], [752, 870], [784, 1090], [830, 1308]],
  [[928, 1308], [965, 1130], [988, 1000], [1032, 683], [1070, 410], [1100, 240], [1127, 108]],
];
const PNK = [
  [[28, 1283], [36, 1248], [70, 1050], [96, 890], [128, 683], [158, 460], [182, 300], [207, 180], [225, 108]],
  [[334, 108], [345, 150], [370, 290], [388, 395], [403, 490], [432, 683], [465, 910], [487, 1050], [508, 1165], [522, 1250], [539, 1308]],
  [[616, 1308], [634, 1250], [656, 1130], [688, 950], [728, 683], [762, 430], [790, 270], [810, 170], [825, 108]],
  [[934, 108], [958, 220], [985, 350], [1002, 480], [1032, 683], [1070, 950], [1095, 1085], [1125, 1250], [1140, 1308]],
  [[1219, 1308], [1230, 1270]],
];

function Display() {
  return (
    <svg width="408" height="407" viewBox="718 129 408 407" shapeRendering="crispEdges" className="block">
      <rect x="718" y="129" width="408" height="407" fill="#e8e8e8" />
      <rect x="719.500" y="130.500" width="403" height="404" fill="#b0b0b0" stroke="#000" />
      <path d="M1124.500 129v407" stroke="#000" />
      <rect x="721" y="132" width="401" height="401" fill="#000" />
      <path stroke="#004400" d={range(741.500, 1121, 20).map((v) => `M${v} 132v401`).join("") + range(152.500, 532, 20).map((v) => `M721 ${v}h401`).join("")} />
      <path stroke="#007800" d="M721 132.500h401M721.500 132v401M1121.500 132v401" />
      <path stroke="#00d040" d="M721 532.500h401" />
      <path stroke="#909090" strokeDasharray="3 3" d="M855.500 132v401" />
      {PNK.map((p, i) => <polyline key={i} points={tr(p)} fill="none" stroke="#e0187c" />)}
      {YEL.map((p, i) => <polyline key={i} points={tr(p)} fill="none" stroke="#ffff10" />)}
    </svg>
  );
}

const Arrows = ({ x, c }) => <path d={`M${x} 195.500l4 7h-3.300v9.500h3.300l-4 7-4-7h3.300v-9.500h-3.300z`} fill={c} />;
const VDrum = ({ x, nums }) => {
  const id = `vd${x}${nums[0][0]}`.replace(/[^a-z0-9]/gi, "");
  const cx = x + 19.500;
  return (
    <g>
      <rect x={x + 0.500} y="168.500" width="37" height="80" fill="#a8a8a8" stroke="#000" />
      <path d={`M${x + 1.500} 247.500v-78h35.500M${x} 249.500h39v-81`} fill="none" stroke="#e8e8e8" />
      <clipPath id={id}><rect x={x + 7} y="171" width="25" height="75" /></clipPath>
      <rect x={x + 7} y="171" width="25" height="75" fill="url(#drumV)" />
      <path d={`M${x + 6.500} 171v75M${x + 31.500} 171v75`} stroke="#000" />
      <path d={range(173, 246, 4.060).map((y) => `M${x + 7} ${Math.round(y) + 0.5}h3M${x + 28} ${Math.round(y) + 0.5}h3`).join("")} stroke="#444" strokeWidth=".8" />
      <g clipPath={`url(#${id})`}>{nums.map(([t, y]) => <T key={t} x={cx} y={y + 3.500} s={9.500} a="middle" c="#222">{t}</T>)}</g>
      <path d={`M${x + 1} 202.500v9l5.500-4.500zM${x + 37} 202.500v9l-5.500-4.500z`} fill="#f00" />
    </g>
  );
};
const Box = ({ x, y, w, h }) => (
  <g shapeRendering="crispEdges"><rect x={x} y={y} width={w} height={h} fill="#a8a8a8" stroke="#000" /><path d={`M${x + 1} ${y + h - 1}v-${h - 2}h${w - 2}M${x - 1} ${y + h + 1}h${w + 2}v-${h + 1}`} fill="none" stroke="#e8e8e8" /></g>
);
const HandleV = ({ x, y }) => (
  <g shapeRendering="crispEdges"><rect x={x} y={y} width="10" height="14" fill="#d8d8d8" stroke="#555" /><path d={`M${x + 2} ${y + 3}h7M${x + 2} ${y + 5}h7M${x + 2} ${y + 7}h7M${x + 2} ${y + 9}h7M${x + 2} ${y + 11}h7`} stroke="#777" /></g>
);
const HandleH = ({ x, y }) => (
  <g shapeRendering="crispEdges"><rect x={x} y={y} width="14" height="10" fill="#d8d8d8" stroke="#555" /><path d={`M${x + 3} ${y + 2}v7M${x + 5} ${y + 2}v7M${x + 7} ${y + 2}v7M${x + 9} ${y + 2}v7M${x + 11} ${y + 2}v7`} stroke="#555" /></g>
);
const Btn = ({ x, y, lit }) => (
  <g shapeRendering="crispEdges"><rect x={x} y={y} width="14" height="14" fill={lit ? "url(#lit)" : "url(#btn)"} stroke={lit ? "#dcdcdc" : "#000"} /><path d={`M${x - 0.5} ${y + 15}h15.500v-15`} fill="none" stroke="#111" /></g>
);

/* Rotary knob on its white arched scale; centre at 0,0. */
const Knob = ({ x, y, labels, unitL, unitR, value, c, angle, inner = 45, step = 27 }) => (
  <g transform={`translate(${x} ${y})`}>
    <path d="M-44 47V0a44.300 43.500 0 0 1 89 0V47H20V19H-19V47z" fill="#fff" stroke="#333" />
    <path d={range(-135, 136, step).map((a) => { const r = (a * Math.PI) / 180, s = Math.sin(r), k = -Math.cos(r); return `M${s * 29} ${k * 29}L${s * 33.500} ${k * 33.500}`; }).join("")} stroke="#222" />
    <path d="M15-28L23-40M17.500-27L26-38" stroke="#333" />
    <circle r="29.500" cx="1" cy="1" fill="#666" />
    <circle r="29" fill="url(#ring)" stroke="#555" />
    <circle r="16" cx=".5" fill="#888" /><circle r="14.500" cx=".5" fill="url(#cap)" stroke="#666" strokeWidth=".6" />
    <path d="M0-5.500L5 4.500H-5z" fill={c} transform={`rotate(${angle}) translate(0 -22.500)`} />
    <path d="M4 6.500l5-3.500 1 7z" fill={c} transform={`translate(0 .5) rotate(${inner - 45})`} />
    {labels.map(([t, lx, ly], i) => <T key={i} x={lx / 3} y={ly / 3 + 2.700} s={7.500} a="middle">{t}</T>)}
    <T x={-32.500} y={40.500} s={9.500} a="middle">{unitL}</T><T x={32} y={40.500} s={9.500} a="middle">{unitR}</T>
    <rect x="-17" y="31.500" width="35" height="13" fill="#fff" stroke="#000" shapeRendering="crispEdges" /><path d="M-16 45.500h35v-13" fill="none" stroke="#ddd" />
    <T x={-15.500} y={41.500} s={9.500} c="#000080">{value}</T>
  </g>
);
const CH_LABELS = [["20", -87, 83], ["10", -112, 48], ["5", -116, 3], ["2", -106, -39], ["1", -82, -77], ["0.5", -43, -104], ["0.2", 2, -114], ["0.1", 43, -105], ["50", 85, -78], ["20", 111, -39], ["10", 117, 3], ["5", 108, 48], ["2", 83, 83]];
const HZ_LABELS = [["1", -46, -104], ["0.5", -17, -117], ["0.2", 16, -118], ["0.1", 44, -104], ["50", 79, -82], ["20", 101, -64], ["10", 112, -34], ["5", 119, -1], ["2", 116, 30], ["1", 108, 62], ["0.5", 86, 85], ["2", -73, -88], ["5", -95, -64], ["10", -112, -34], ["20", -115, -4], ["50", -115, 32], ["100", -109, 60], ["200", -84, 85]];

function Panel({ title, w, c, children }) {
  return (
    <section className="flex h-[212px] w-[94px] shrink-0 flex-col border-r border-b border-black bg-[#a9a9a9]">
      <div className={`flex h-[27px] shrink-0 items-center justify-center border-b border-l border-t border-b-black border-l-[#ddd] border-t-[#ddd] ${ARIAL} pr-2 pt-[3px] text-[12.5px] font-bold ${c}`}><Fit w={w}>{title}</Fit></div>
      {children}
    </section>
  );
}
const Face = ({ x = 1220, children }) => (
  <svg width="93" height="184" viewBox={`${x} 156 93 184`} className="block shrink-0"><path d={`M${x} 156.500h93M${x + 0.500} 156v184`} stroke="#ddd" />{children}</svg>
);

function Channel({ title, w = 57, tc, c, nums, value, angle, sum, inner }) {
  return (
    <Panel title={title} c={tc} w={w}>
      <Face>
        <T x={1233} y={166} w={33} s={9} c="#333">Position</T>
        <Arrows x={1225.500} c={c} />
        <VDrum x={1231} nums={nums} />
        {[["AC", 172.500], ["DC", 186.500], ["GND", 200.500], ["OFF", 214.500]].map(([t, y]) => <T key={t} x={1294.500} y={y} s={9.500} a="end">{t}</T>)}
        <Box x={1297.500} y={159.500} w={13} h={61} />
        <path d="M1303 174v41" stroke="#000" strokeWidth="2" />
        <HandleV x={1298.500} y={160.500} />
        <T x={1271.500} y={233} w={23}>Invert</T><Btn x={1296.500} y={223.500} />
        {sum && <><T x={1277} y={250} s={9.500} w={17.500}>A+B</T><Btn x={1296.500} y={239.500} /></>}
        <Knob x={1266.300} y={293} labels={CH_LABELS} unitL="V" unitR="mV" value={value} c={c} angle={angle} inner={inner} />
      </Face>
    </Panel>
  );
}
const Abcd = ({ xs, y }) => [["A", "#ffff00"], ["B", "#008fe0"], ["C", "#e0107c"], ["D", "#009040"]].map(([t, c], i) => <T key={t} x={xs[i]} y={y} s={9} b a="middle" c={c}>{t}</T>);

function Scope() {
  return (
    <div className={`absolute left-[718px] top-[-1px] z-10 h-[450px] w-[648px] overflow-hidden bg-white shadow-[0_3px_10px_rgba(0,0,0,0.45)] ${UI}`}>
      <svg className="absolute h-0 w-0">
        <defs>
          <linearGradient id="drumV" x1="0" y1="0" x2="0" y2="1"><stop offset="0" stopColor="#505050" /><stop offset=".28" stopColor="#888" /><stop offset=".5" stopColor="#fff" /><stop offset=".72" stopColor="#888" /><stop offset="1" stopColor="#484848" /></linearGradient>
          <linearGradient id="drumH"><stop offset="0" stopColor="#505050" /><stop offset=".28" stopColor="#888" /><stop offset=".5" stopColor="#fff" /><stop offset=".72" stopColor="#888" /><stop offset="1" stopColor="#404040" /></linearGradient>
          <radialGradient id="btn" cx=".35" cy=".35"><stop offset="0" stopColor="#aaa" /><stop offset="1" stopColor="#444" /></radialGradient>
          <radialGradient id="lit" cx=".3" cy=".3" r=".8"><stop offset="0" stopColor="#fff" /><stop offset="1" stopColor="#ffb0b4" /></radialGradient>
          <linearGradient id="ring" x1=".1" y1=".05" x2=".9" y2=".95"><stop offset="0" stopColor="#dcdcdc" /><stop offset=".55" stopColor="#b4b4b4" /><stop offset="1" stopColor="#6c6c6c" /></linearGradient>
          <linearGradient id="cap" x1="0" y1="0" x2="1" y2="1"><stop offset="0" stopColor="#999" /><stop offset=".3" stopColor="#eee" /><stop offset=".42" stopColor="#b8b8b8" /><stop offset=".55" stopColor="#fff" /><stop offset=".7" stopColor="#bbb" /><stop offset="1" stopColor="#eee" /></linearGradient>
        </defs>
      </svg>
      <div className="flex h-[26px] items-center pl-[3px] text-[11.5px] text-[#999]"><Fit w={105}>Digital Oscilloscope</Fit></div>
      <div className="flex">
        <div className="w-[408px] shrink-0 bg-[#e8e8e8]">
          <Display />
          <div className="ml-px flex h-[17px] w-[405px] items-center justify-between border-b border-t border-r border-black bg-[#f0f0f0] pl-[5px] pr-[4px]">
            <svg width="7" height="9" viewBox="0 0 7 9"><path d="M5.500 1l-3.500 3.500 3.500 3.500" fill="none" stroke="#333" strokeWidth="1.800" /></svg>
            <div className="ml-auto mr-[14px] h-[14px] w-[17px] bg-[#cdcdcd]" />
            <svg width="7" height="9" viewBox="0 0 7 9"><path d="M1.500 1l3.500 3.500-3.500 3.500" fill="none" stroke="#333" strokeWidth="1.800" /></svg>
          </div>
        </div>
        <div className="flex flex-col">
          <Panel title="Trigger" w={42} c="text-[#f0909c]">
            <Face x={1126}>
              <T x={1145} y={166} w={22} s={9} c="#333">Level</T>
              <Arrows x={1131.800} c="#f0909c" />
              <VDrum x={1137} nums={[["-10", 187], ["0", 207], ["10", 227]]} />
              <T x={1200} y={172.500} s={9.500} a="end">AC</T><T x={1200} y={186.500} s={9.500} a="end">DC</T>
              <Box x={1202.500} y={159.500} w={13} h={31} /><path d="M1209 164v12" stroke="#000" strokeWidth="2" /><HandleV x={1204.500} y={175.500} />
              <Box x={1202.500} y={203.500} w={13} h={32} /><path d="M1209 218v12" stroke="#000" strokeWidth="2" /><HandleV x={1204.500} y={204.500} />
              <path d="M1191 217.500h4.500v-10h3.500M1191 222.500h4.500v10h3.500" fill="none" stroke="#444" strokeWidth="1.300" />
              <T x={1180.500} y={260} w={19} s={9.500}>Auto</T><Btn x={1202.500} y={249.500} lit />
              <T x={1161} y={275} w={39} s={9.500}>One-Shot</T><Btn x={1202.500} y={265.500} />
              <T x={1164} y={291} w={36} s={9.500}>Cursors</T><Btn x={1202.500} y={281.500} />
              <T x={1157} y={311} w={29} s={9.500} c="#333">Source</T>
              <Abcd xs={[1151.500, 1166, 1180.500, 1195]} y={322} />
              <Box x={1140.500} y={324.500} w={62} h={13} /><path d="M1157 331h41" stroke="#000" strokeWidth="2" /><HandleH x={1142.500} y={326.500} />
            </Face>
          </Panel>
          <Panel title="Horizontal" w={62} c="text-[#e87820]">
            <Face x={1126}>
              <T x={1156.500} y={168.500} w={29} s={9.500} c="#333">Source</T>
              <path d="M1138 177.500h2l8-6v6" fill="none" stroke="#e87820" />
              <Abcd xs={[1157.500, 1172, 1186.500, 1201]} y={178} />
              <Box x={1133.500} y={181.500} w={77} h={13} /><path d="M1150 188h55" stroke="#000" strokeWidth="2" /><HandleH x={1135.500} y={183.500} />
              <T x={1155} y={207} w={33} s={9} c="#333">Position</T>
              <rect x="1133.500" y="210.500" width="79" height="38" fill="#a8a8a8" stroke="#000" />
              <path d="M1134.500 247.500v-36h77" fill="none" stroke="#e8e8e8" />
              <rect x="1135" y="217" width="76" height="25" fill="url(#drumH)" />
              <path d="M1135 217.500h76M1135 241.500h76" stroke="#000" />
              <path d={range(1137, 1210, 4.060).map((v) => `M${Math.round(v) + 0.5} 218v3M${Math.round(v) + 0.5} 238v3`).join("")} stroke="#444" strokeWidth=".8" />
              {[["50", 1142], ["140", 1160], ["130", 1180], ["120", 1200]].map(([t, x]) => <T key={t} x={x} y={232} s={9.500} a="middle">{t}</T>)}
              <path d="M1166.500 211h10l-5 5zM1166.500 248h10l-5-5.500z" fill="#f00" />
              <Knob x={1172.500} y={294} labels={HZ_LABELS} unitL="ms" unitR="µs" value="2m" c="#e87820" angle={-35} step={15} />
            </Face>
          </Panel>
        </div>
        <div className="flex flex-col">
          <Channel title="Channel A" tc="text-[#ffff00]" c="#ffff00" nums={[["-10", 183], ["0", 203], ["10", 223], ["20", 243]]} value="20" angle={-137} sum />
          <Channel title="Channel B" tc="text-[#0c90dc]" c="#0c90dc" nums={[["-210", 187], ["-200", 207], ["-190", 227]]} value="5" angle={-90} />
        </div>
        <div className="flex flex-col">
          <Channel title="Channel C" tc="text-[#e0107c]" c="#e0107c" nums={[["0", 183], ["10", 203], ["20", 223], ["30", 243]]} value="0.21" angle={0} sum />
          <Channel title="Channel D" tc="text-[#0c9048]" c="#0c9048" nums={[["-210", 187], ["-200", 207], ["-190", 227]]} value="5" angle={-90} />
        </div>
      </div>
    </div>
  );
}

function StatusBar() {
  const bar = "flex h-[25px] items-center bg-linear-to-b from-[#e6f2f9] to-[#b8daec]";
  return (
    <footer className="flex h-[27px] items-end bg-[#e1e9ef] text-[11.5px] text-black">
      <div className={`${bar} w-[258px] border-r border-[#a5cbe0]`}>
        <Grip />
        <svg width="181" height="25" viewBox="10 703 181 25">
          <path d="M24.500 708.500v13l9-6.500z" fill="#00c800" stroke="#008800" strokeWidth=".8" />
          <path d="M60 708.500h2.500v13h-2.500zM64.500 708.500v13l7.500-6.500z" fill="#1878e0" stroke="#0850a8" strokeWidth=".8" />
          <path d="M97 708.500h2.500v13h-2.500zM102 708.500h2.500v13h-2.500zM131.500 708.500h12.500v12.500h-12.500z" fill="#1878e0" stroke="#0850a8" strokeWidth=".8" />
          <path d="M158.500 707v17" stroke="#999" /><path d="M159.500 707v17" stroke="#fff" />
          <circle cx="177.500" cy="714.500" r="6.500" fill="#0a9a1e" stroke="#065c10" />
          <path d="M177.500 710v2M175.500 713.500h2.500v5M175 718.500h5.500" stroke="#fff" strokeWidth="1.600" fill="none" />
        </svg>
        <Fit w={64}>2 Message(s)</Fit>
      </div>
      <div className={`${bar} ml-[5px] w-[413px] border-r border-[#a5cbe0]`}>
        <Grip />
        <Fit w={219} className="ml-[3px] text-[#1d4a2a]">ANIMATING: 00:01:55.600000 (CPU load 8%)</Fit>
      </div>
      <div className={`${bar} ml-[5px] flex-1`}><Grip /></div>
    </footer>
  );
}

function Taskbar() {
  return (
    <footer className="flex h-10 bg-[#060b12] text-white">
      <div className="flex w-12 items-center justify-center">
        <svg width="16" height="16" viewBox="0 0 16 16" fill="#fff"><path d="M0 2.200l6.500-.9v6.200H0zM7.300 1.200L16 0v7.500H7.300zM0 8.300h6.500v6.200L0 13.600zM7.300 8.300H16V16l-8.700-1.200z" /></svg>
      </div>
      <div className="flex w-[344px] items-center border-t border-[#bbb] bg-[#f1f1f1] pl-[9px] pr-[13px] text-[14.5px] text-[#3a3a3a]">
        <div className="h-[21px] w-[21px] rounded-full border-[3px] border-black" />
        <Fit w={128} className="ml-[10px]">Type here to search</Fit>
        <svg width="14" height="18" viewBox="0 0 14 18" className="ml-auto" fill="none" stroke="#333" strokeWidth="1.200"><rect x="4.500" y="1" width="5" height="10.500" rx="2.500" /><path d="M2.500 8v3.500q0 2 2 2h5q2 0 2-2v-3.500M7 14v3M4.500 17h5" /></svg>
      </div>
      <svg width="344" height="40" viewBox="392 728 344 40">
        <g fill="none" stroke="#fff" strokeWidth="1.200"><path d="M408.500 740v3h11v-3M408.500 745.500h11v6h-11zM408.500 757v-3h11v3M423.500 740v5M423.500 749v8" /><path d="M422 746.500h3v2h-3z" fill="#fff" /></g>
        <path d="M457 748c.5-7 5-11 10.500-11 6 0 10 4.500 10 10.500v3H463c.2 4 3 5.500 6.500 5.500 3 0 5.500-.8 7-2v4.600c-2 1.200-5 1.900-8 1.900-6.500 0-10.500-4-10.500-9.500 0-4 2-7 5.500-8.500-3 .5-5 2.500-6.500 5.500zM463.200 746.500h8.600c0-3-1.500-4.800-4.200-4.800-2.400 0-4 1.800-4.400 4.800z" fill="#0a84e0" fillRule="evenodd" />
        <path d="M505 738.500h8l2 2h10.500v18H505z" fill="#f5c84a" /><path d="M506 743h19.500v15.500h-19.500z" fill="#fde28b" /><path d="M509.500 758.500v-7q0-2 2-2h8q2 0 2 2v7h-3.500v-4.500h-5v4.500z" fill="#3aaee8" />
        <path d="M553.500 743.500h23v15h-23z" fill="#fff" /><path d="M560.500 743v-2q0-3.500 4.500-3.500t4.500 3.500v2" fill="none" stroke="#fff" strokeWidth="1.500" />
        <path d="M559 746h5v5h-5z" fill="#f25022" /><path d="M565.500 746h5v5h-5z" fill="#7fba00" /><path d="M559 752.300h5v5h-5z" fill="#00a4ef" /><path d="M565.500 752.300h5v5h-5z" fill="#ffb900" />
        <path d="M602 746l12-8 12 8v12.500h-24z" fill="#fff" /><path d="M603.500 746.500h22l-9 5 3 4-6-3z" fill="#060b12" />
        <circle cx="662.500" cy="748" r="11" fill="#fcc934" /><path d="M662.500 748h-5L653 742.500a11 11 0 0 0 8.500 16.500l5.500-8.500z" fill="#2aa24c" /><path d="M653 742.300a11 11 0 0 1 19.200.7h-9.500l-5 5z" fill="#e4463a" /><circle cx="662.500" cy="748" r="5.200" fill="#fff" /><circle cx="662.500" cy="748" r="4.200" fill="#4285f4" />
        <path d="M688 728h48v40h-48z" fill="#3b4047" />
        <g fill="none"><path d="M702 738l19 20M721 738l-19 20" stroke="#8b979f" /><path d="M703 740q7 3 7 8t-7 9M720 740q-7 3-7 8t7 9" stroke="#7d8d99" /></g>
        <path d="M705 744l7-2 6 6-3 6-7-1z" fill="#7ea8c6" /><path d="M708 745l4-1 2 4-4 2z" fill="#dceaf2" /><path d="M712 750l4-1-1 4-4 1z" fill="#2f5574" />
        <g fill="#e8b090"><circle cx="702.500" cy="738.500" r="1.300" /><circle cx="721" cy="738.500" r="1.300" /><circle cx="702.500" cy="757.500" r="1.300" /><circle cx="721" cy="757.500" r="1.300" /></g>
        <path d="M447 765.500h40v2.500h-40zM496 765.500h40v2.500h-40zM643 765.500h40v2.500h-40zM688 765.500h48v2.500h-48z" fill="#76b9ed" />
      </svg>
      <svg width="106" height="40" viewBox="1100 728 106 40" className="ml-auto" fill="none" stroke="#fff" strokeWidth="1.200">
        <circle cx="1108.500" cy="748" r="2.800" /><path d="M1104.500 756q0-5 4-5t4 5" /><circle cx="1114.500" cy="742.500" r="2.500" /><path d="M1112.500 747q5-2 5.500 4" />
        <path d="M1141.500 750.500l5.500-5.500 5.500 5.500" strokeWidth="1.500" />
        <path d="M1167 742.500h11.500v9h-9M1173.500 752v3.500M1170 755.500h7M1163.500 741.500h5v4h-5zM1166 746v9" />
        <path d="M1187.500 746h2.500l4-4v12l-4-4h-2.500z" /><circle cx="1198" cy="751" r="4.500" fill="#e0242e" stroke="none" /><path d="M1196.200 749.200l3.600 3.600M1199.800 749.200l-3.600 3.600" />
      </svg>
      <div className="ml-[7px] flex items-center text-[12px]"><Fit w={24}>ENG</Fit></div>
      <div className="ml-[10px] flex w-[62px] flex-col items-center pt-[2px] text-[11.5px] leading-[18px]"><Fit w={28}>14:57</Fit><Fit w={59}>25-07-2019</Fit></div>
      <svg width="57" height="40" viewBox="1309 728 57 40">
        <path d="M1325.500 740.500h15.500v12.500h-7l-4 4v-4h-4.500z" fill="#fff" /><path d="M1328 743.500h10.500M1328 746.500h10.500M1328 749.500h7" stroke="#111" />
        <circle cx="1340" cy="755" r="7.500" fill="#2b2f35" stroke="#b8b8b8" />
        <T x={1340} y={759} s={11} a="middle" c="#fff">1</T>
        <path d="M1361.500 728v40" stroke="#555" />
      </svg>
    </footer>
  );
}

export default function App() {
  return (
    <div className={`h-[768px] w-[1366px] overflow-hidden bg-[#e1e9ef] ${UI}`}>
      <Header />
      <div className="h-[6px] bg-[#b4d5e6]" />
      <main className="relative flex h-[597px]">
        <ToolColumns />
        <SidePanel />
        <div className="flex-1 bg-[#b0cfe0] pl-[4px]"><Sheet /></div>
        <Scope />
      </main>
      <StatusBar />
      <Taskbar />
    </div>
  );
}
